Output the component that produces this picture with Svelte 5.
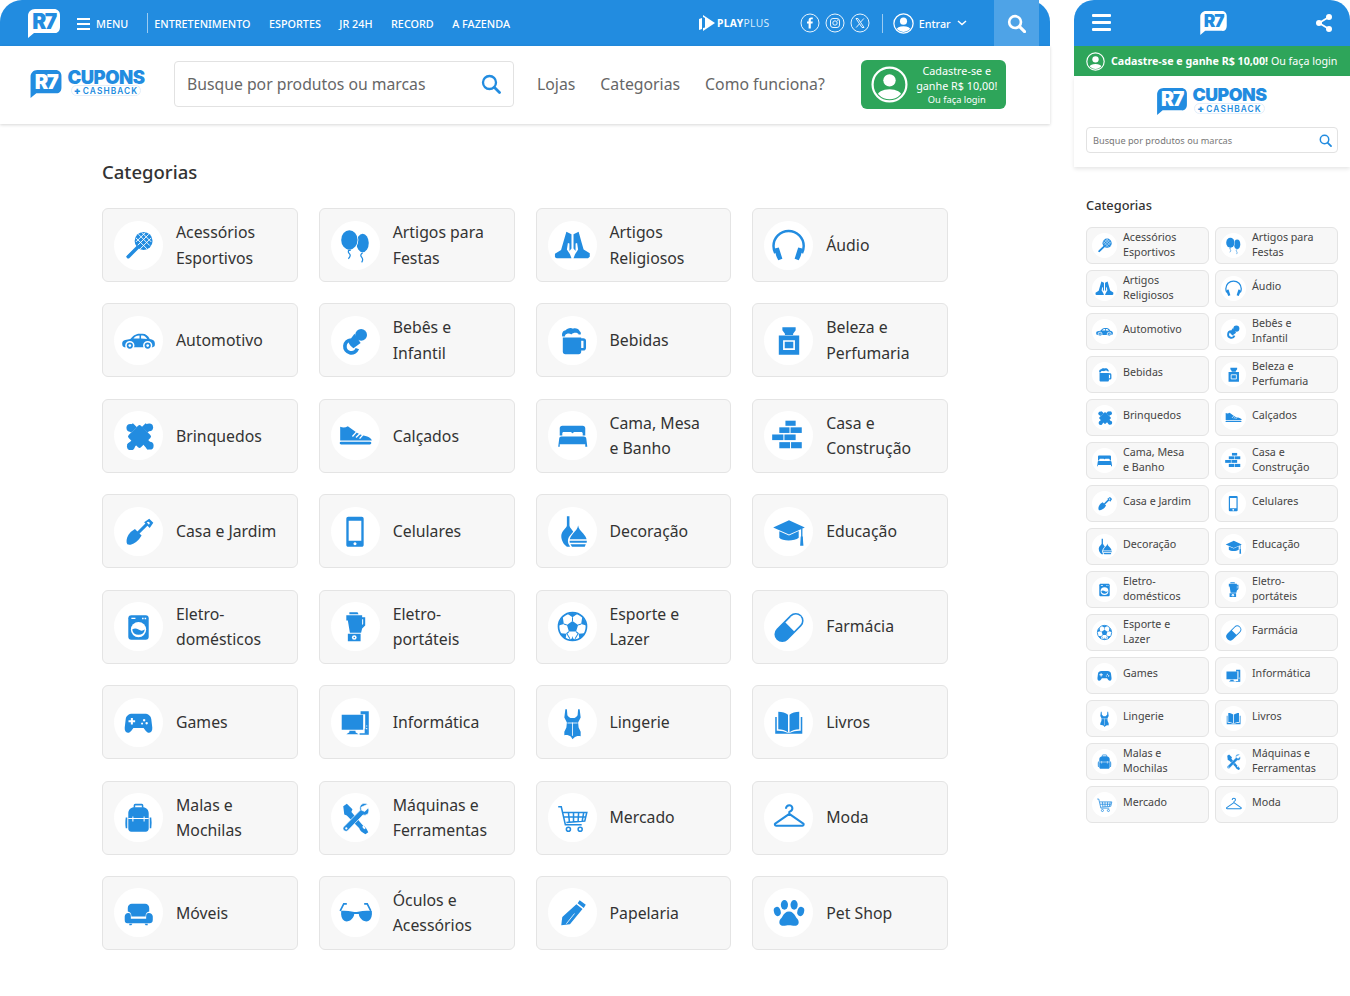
<script>
const B = '#228ce0';
const icons = {
racket: `<circle cx="29" cy="19.500" r="8.800" fill="${B}"/><path d="M24 13l11 11M21.500 16.500l11 11M27.500 11.500l9 9M34 13L23 24M36.500 16.500l-11 11M30.500 11.500l-9 9" stroke="#fff" stroke-width=".9" fill="none"/><path d="M23.500 26L20 27.500l-8 7.500 1.500 1.500 7.500-8z" fill="${B}"/><path d="M23.500 25.500l-9.500 9.500" stroke="${B}" stroke-width="3.400" stroke-linecap="round"/>`,
balloons: `<ellipse cx="31" cy="21.500" rx="6" ry="9" fill="${B}"/><path d="M31 31q-3 2-1 4.500t0 5M18 28q-2 2 0 4t-1 5" stroke="${B}" stroke-width="1.200" fill="none"/><ellipse cx="18" cy="18.500" rx="8.800" ry="10.200" fill="#fff"/><ellipse cx="18" cy="18.500" rx="8" ry="9.500" fill="${B}"/><path d="M16 28h4l-1 1.500h-2z" fill="${B}"/>`,
hands: `<path fill="${B}" d="M18 10.500l5 2.500V27l-2 2.500V22l-1.500-.5-1 6.500 3 4.500 1.500 4H8.500L6.800 35.500v-3.500l6-3.500 2-7zM30 10.500l-5 2.500V27l2 2.500V22l1.500-.5 1 6.500-3 4.500-1.500 4h14.200l1.700-1.500v-3.500l-6-3.500-2-7z"/>`,
headphones: `<path d="M11 31.500c-1-2-1.700-4.500-1.700-7a14.800 14.800 0 0 1 29.600 0c0 2.500-.7 5-1.700 7" fill="none" stroke="${B}" stroke-width="2.400"/><path d="M10.500 27l4-1 3.500 11-4 1.500q-3-5-3.500-11.500zM37.500 27l-4-1L30 37l4 1.500q3-5 3.500-11.500z" fill="${B}"/>`,
car: `<path fill="${B}" d="M8 27c0-2 1-3 3-3.500l5-1c2.500-2.500 5-5 9-5h3c3 0 5.500 2 7 5 3 .5 5 1.500 5 4v2c0 1-1 2-2 2H10c-1 0-2-1-2-3.500z"/><path fill="#fff" d="M19 22c1.500-1.500 3-2.800 6-2.800v2.800zM26.500 19.200h1.500c2 0 3 1.300 4.500 3.300l-6-.5z"/><g fill="${B}" stroke="#fff" stroke-width="1.500"><circle cx="15.500" cy="29" r="3.800"/><circle cx="33" cy="29" r="3.800"/></g><circle cx="15.500" cy="29" r="1.300" fill="#fff"/><circle cx="33" cy="29" r="1.300" fill="#fff"/>`,
pacifier: `<path d="M19.500 23.500a6.300 6.300 0 1 0 6.300 8.500" fill="none" stroke="${B}" stroke-width="3.600"/><circle cx="29.500" cy="18.500" r="5.800" fill="${B}"/><path d="M17 25.500l6-8 6 9-7 5c-2-1-4-3.500-5-6z" fill="${B}"/><path d="M17.500 29.500c.8 1 1.500 1.500 3 2" stroke="#fff" stroke-width="1" fill="none"/>`,
beer: `<path fill="${B}" d="M14.500 21h18v14c0 1.500-1 2.500-2.500 2.500H17c-1.500 0-2.500-1-2.500-2.500z"/><path fill="none" stroke="${B}" stroke-width="2.500" d="M32 23h2.500c1 0 1.500.7 1.500 1.500V31c0 1-.7 1.500-1.500 1.500H32"/><path fill="${B}" d="M14 20c-1-4 1.500-6 3.500-6 1-2 5-3 7-1.500 2-1 6 0 6.500 2.500 1 .5 1.500 2 1 3h-2c-1-2-5-2-7 0-2-1.500-5-1-6 .5v1.500z"/><path fill="#fff" d="M16.500 19.500c1-1.500 4-2.500 6-.7 2-1.800 5-1.800 7.500 0v1.500H16.500z"/>`,
perfume: `<path fill="${B}" d="M18 11h13v3l-2.500 3.500v1h-8v-1L18 14zM14.500 19h20v19h-20z"/><path fill="none" stroke="#fff" stroke-width="1.600" d="M19.500 24.500h10v8h-10z"/>`,
puzzle: `<g fill="${B}"><rect x="16.500" y="16.500" width="17" height="17" rx="2" transform="rotate(45 25 25)"/><circle cx="16" cy="16.500" r="3.800"/><circle cx="34.500" cy="16" r="3.800"/><circle cx="35" cy="34" r="3.800"/><circle cx="16.500" cy="34.500" r="3.800"/><path d="M12.500 17l6-5 4 4-6 5zM31 12l6 5-4 4-6-5zM38 33l-5 5-5-6 5-4zM13 33l5 5 5-6-5-4z"/></g>`,
shoe: `<path fill="${B}" d="M9 15.500c2.500 1 5 1 7.500-.5l8.500 6c3.500 2.500 7 2.500 10.500 4 2.500 1 4 2 4.500 4H9z"/><path fill="none" stroke="#fff" stroke-width="1.300" d="M21 25l4-4.500M24.500 26l4-4M28 27l3.500-4"/><rect x="8.500" y="30" width="31" height="2.800" rx="1.400" fill="${B}"/>`,
bed: `<path fill="${B}" d="M14 14.500h20c1.500 0 2.500 1 2.500 2.500v7h-2.500v-2c0-1-.7-1.500-1.500-1.500h-6c-1 0-2.500.7-2.500 1.500 0-.8-1.500-1.500-2.500-1.500h-6c-1 0-1.500.5-1.500 1.500v2h-2.500v-7c0-1.500 1-2.500 2.500-2.500zM11 27c0-1.300 1-2 2-2h22c1.200 0 2.500.7 2.500 2l1 8h-2v-2.500h-25V35h-1.500z"/>`,
bricks: `<g fill="${B}"><rect x="21" y="9.500" width="10" height="5"/><rect x="15" y="16" width="10" height="5.500"/><rect x="26" y="16" width="11" height="5.500"/><rect x="8" y="23" width="11" height="5.500"/><rect x="20" y="23" width="11" height="5.500"/><rect x="15" y="30.500" width="10.500" height="6"/><rect x="26.500" y="30.500" width="10.500" height="6"/></g>`,
shovel: `<path fill="${B}" d="M13 36.500c-2-4 .5-9.500 4-12.500l3.500-2.500 6.500 6.500-2.500 3.500c-3 3.500-8 6.500-11.500 5z"/><path d="M23 26l10-10" stroke="${B}" stroke-width="3"/><path fill="${B}" fill-rule="evenodd" d="M34.500 11.500l4 4-3.500 5-5.500-5.500zM33.500 14.500a1.500 1.500 0 1 0 .01 0z"/>`,
phone: `<path fill="${B}" fill-rule="evenodd" d="M17 9.500h13c1.300 0 2 .7 2 2v25.500c0 1.300-.7 2-2 2H17c-1.300 0-2-.7-2-2V11.500c0-1.300.7-2 2-2zM17.300 13.500v19.500h12.400V13.500zM23.500 34.500a1.500 1.500 0 1 0 .01 0z"/>`,
vases: `<path fill="${B}" d="M18.500 9h2.500v9c.2 3 5 5 5 11 0 4.500-2.500 8.500-5 10h-2.500c-3-2-5.500-6-5.500-10.500 0-5.500 5.500-8 5.500-10.500z"/><path fill="#fff" d="M29.500 16.500c.5 3.500 3 5 5.500 8 2.500 2.500 4.500 5.500 4.500 9 0 2.500-1 4.500-2.500 6.500H23c-1.500-1.500-3.500-4-3.500-6.500 0-4 2.500-6 5-9 2-2.500 4-4.500 5-8z"/><path fill="${B}" d="M29.500 18c.5 3.500 2.500 5 5 8 1.500 2 2.800 3.500 3.300 5.500H21.300c.5-2 1.800-3.500 3.200-5.500 2.500-3 4.500-4.500 5-8zM21.200 33H38c.1 1 0 1.500-.2 2H21.400c-.2-.5-.3-1-.2-2zM22 36.500h15L36 39H23.500z"/>`,
cap: `<path fill="${B}" d="M24.500 13L40 20l-15.500 7L9 20z"/><path fill="${B}" d="M15 23.800v6.400c3 3.500 15 3.500 19 0v-6.600l-9.500 4.400z"/><path stroke="${B}" stroke-width="1.300" d="M37 21v14"/><path fill="${B}" d="M36 29h2l.6 9h-3.200z"/>`,
washer: `<path fill="${B}" d="M17 13h14c2 0 3 1 3 3v18c0 2-1 3-3 3H17c-2 0-3-1-3-3V16c0-2 1-3 3-3z"/><circle cx="24" cy="27" r="7.500" fill="#fff"/><path fill="${B}" d="M17.800 27c2-1.500 4-1.500 6.200 0s4 1.500 6.200 0a6.300 6.300 0 0 1-12.400 0z"/><path fill="#fff" d="M17 15.500h4v1.200h-4zM27.500 15.500h1.500v1.500h-1.500zM30 15.500h1.500v1.500H30z"/>`,
blender: `<path fill="${B}" d="M18 10h8l1 2H18zM15 13h15.500v2h3V23l-3 3-1 4H18.500L16.500 18h-1.500zM30.500 17v5.500l1-1V17zM16.500 31h12.500v7.500H16.500z"/><circle cx="22.800" cy="34.800" r="2.300" fill="#fff"/><circle cx="22.800" cy="34.800" r=".8" fill="${B}"/>`,
ball: `<circle cx="24" cy="24" r="13.700" fill="#fff" stroke="${B}" stroke-width="1.700"/><path fill="${B}" d="M24 18.500l5.500 4-2 6.500h-7l-2-6.500zM19 11.500c3-1 7-1 10 0l-5 3.500zM33.500 15c2 2 3.500 5 4 8l-5-1.500zM14.500 15c-2 2-3.500 5-4 8l5-1.500zM12.200 30.500c1.200 2.500 3 4.500 5 5.800l.8-5.300zM35.800 30.500c-1.200 2.500-3 4.500-5 5.800l-.8-5.300zM21 37.600c2 .3 4 .3 6 0l-3-2.500z"/><path stroke="${B}" stroke-width="1" fill="none" d="M24 15v3.500M32.500 21.500l-3 1M15.500 21.500l3 1M18 31l2.500-2M30 31l-2.500-2M24 35v-1M20.500 29l-2 2 3 5M27.500 29l2 2-3 5"/>`,
pill: `<g transform="rotate(-45 24.500 25)"><rect x="7.500" y="17.300" width="34" height="15.400" rx="7.700" fill="${B}"/><path fill="#fff" d="M25.500 19h8.500a6 6 0 0 1 0 12h-8.500z"/></g>`,
gamepad: `<path fill="${B}" d="M18 15.500h12c3.500 0 6 2 6.500 5l1 8.500c.3 3-1 5-3 5-1.500 0-2.500-.8-3.500-2l-2-2.500H19l-2 2.500c-1 1.200-2 2-3.500 2-2 0-3.300-2-3-5l1-8.500c.5-3 3-5 6.500-5z"/><path fill="#fff" d="M16.500 19.500h2v2.200h2.200v2h-2.200V26h-2v-2.300h-2.300v-2h2.300zM29.500 20.500a1.200 1.200 0 1 0 .01 0zM32 23.500a1.200 1.200 0 1 0 .01 0zM27.500 24a1 1 0 1 0 .01 0z"/>`,
computer: `<path fill="${B}" d="M10.500 16.500h21v14.500h-21zM18 32h6v1.500l3 2H15l3-2zM29 13h8v23h-9v-1.500h7.500V30h-2V16h-4.500z"/><path fill="${B}" d="M33 30h3v5h-3z"/><path fill="#fff" d="M34.500 27h1v1h-1zM34.500 29.500h1v1h-1z"/>`,
lingerie: `<path fill="${B}" d="M17 11h1.500l.5 6c1 1.500 2 2 3 2.500h4c1-.5 2-1 3-2.500l.5-6H31l1 8-2.500 5 .5 5 2 4v4.500c-2-.7-5-.2-6.500 1.500l-1.500 1.500L22.500 38c-1.500-1.500-4.500-2-6.500-1.500V33l2-4 .5-5L16 19z"/><path d="M24 24v13M19 24.500h10" stroke="#fff" stroke-width=".8" fill="none"/>`,
book: `<path fill="${B}" d="M14 13.500c3.500 0 7.500 1 9.500 3v17c-2.500-1.800-6-2.800-9.500-2.800zM34.500 13.500c-3.500 0-7.500 1-9.500 3v17c2.500-1.800 6-2.800 9.500-2.800zM11 18.500h1.500V32c4-.2 7.500.5 10.500 2h2.500c3-1.500 6.500-2.200 10.500-2V18.500h1.500V35H11z"/>`,
bag: `<path fill="none" stroke="${B}" stroke-width="1.500" d="M20 14.500v-2.300c0-.5.3-.8.8-.8h6.400c.5 0 .8.3.8.8v2.300"/><path fill="${B}" d="M20 14h8c3.500 0 6 2.500 6 6v15c0 1.500-1 3-3 3H17c-2 0-3-1.500-3-3V20c0-3.500 2.500-6 6-6zM11.500 24h1.500v10.500h-1.500c-.5-3-.5-7 0-10.500zM35 24h1.500c.5 3.500.5 7 0 10.500H35z"/><path stroke="#fff" stroke-width="1" fill="none" d="M14 25h20M18.500 23v5M29.500 23v5"/>`,
tools: `<path fill="${B}" d="M15.500 10.500l5.500 5.500-1 2.500 11.500 13.500c1.500.5 2.800 2 3.500 3.500l1.500 3-2.800 2-3-2c-1.500-1-2.500-2.500-3-4L15.500 22 13 21l-1-8z"/><path fill="#fff" d="M30.500 33l2 2.500 1.500-1-2-2.500z"/><path fill="${B}" stroke="#fff" stroke-width=".7" d="M36 11c-2.500-1.500-5.500-1-7 1-1 1.500-1 3.500-.5 5L12.500 33c-1 1-1 2.500 0 3.500s2.700 1.500 3.800.5l15-15.500c2 .5 4 .1 5-1.500 1-1.500 1-3.500.3-5.500l-3.500 3.500-3-1-.5-3z"/><circle cx="15" cy="34.700" r="1.100" fill="#fff"/>`,
cart: `<path fill="none" stroke="${B}" stroke-width="1.500" d="M10 13.500h3l4 17.500h16M15 19h23l-2 8.500-18 1.500M20 19l1 9.500M25 19v9.500M30 19l-.5 8.500M35 19l-1.500 8.500M15.500 23.500h21"/><circle cx="20" cy="35.500" r="2" fill="none" stroke="${B}" stroke-width="1.500"/><circle cx="31.500" cy="35.500" r="2" fill="none" stroke="${B}" stroke-width="1.500"/>`,
hanger: `<path fill="none" stroke="${B}" stroke-width="2" stroke-linejoin="round" d="M21.500 15.500c0-2 1.500-3.500 3.300-3.500s3 1.500 3 3c0 1.800-1.200 2.800-3 3.500v2L38.500 30c.8.700.3 2-.8 2H11.800c-1.100 0-1.600-1.300-.8-2l13.800-9.500"/>`,
chair: `<path fill="${B}" d="M17.500 15.500h13c2.200 0 4 1.800 4 4v3.500c-2 .2-3.500 1.800-3.500 4v1H17v-1c0-2.200-1.500-3.800-3.500-4v-3.500c0-2.200 1.800-4 4-4zM14 24.500c1.700 0 2.500 1 2.500 3V30h15v-2.500c0-2 .8-3 2.500-3 2.200 0 4 1.500 4 3.500v3c0 2.500-1.500 3.500-3 3.500H13c-1.500 0-2.500-1-2.500-3.500v-3c0-2 1.500-3.500 3.500-3.500zM15 35h3l-1 1.500h-2zM30 35h3v1.500h-2z"/>`,
glasses: `<path fill="${B}" d="M8 22.500c5-.5 9-.3 13.500.8 1.500.4 3.500.4 5 0 4.500-1.100 8.500-1.300 13.500-.8.500 4.500-.5 8-3 9.700-3 1.500-6.500 0-8.200-2.700-1-1.500-1.500-2.800-1.500-4h-4.600c0 1.200-.5 2.500-1.500 4-1.700 2.700-5.200 4.200-8.200 2.700-2.500-1.700-3.500-5.200-3-9.700z"/><path fill="none" stroke="${B}" stroke-width="1.600" d="M9 22.500l3.500-7h3M39 22.500l-3.500-7h-3"/>`,
pencil: `<path fill="${B}" d="M31 12l6 4.500-2 3-6-4.500zM27.800 16l6 4.500L21.500 35.500 13 36.500l.5-4.500 .5-3.500z"/><path stroke="#fff" stroke-width=".8" d="M26 25L18 35"/>`,
paw: `<g fill="${B}"><ellipse cx="13" cy="23" rx="3.300" ry="4.600" transform="rotate(-15 13 23)"/><ellipse cx="20" cy="16.500" rx="3.500" ry="4.800"/><ellipse cx="29.500" cy="16.500" rx="3.500" ry="4.800"/><ellipse cx="36" cy="23" rx="3.300" ry="4.600" transform="rotate(15 36 23)"/><path d="M24.500 23c3 0 5 2 6.500 5 1 2 3 3 3 5.500 0 2.500-2 3.500-4 3.500-2 0-3.500-.5-5.500-.5s-3.500.5-5.500.5c-2 0-4-1-4-3.500 0-2.500 2-3.500 3-5.500 1.500-3 3.500-5 6.500-5z"/></g>`
};
const all = [
['Acessórios\nEsportivos','racket'],['Artigos para\nFestas','balloons'],['Artigos\nReligiosos','hands'],['Áudio','headphones'],
['Automotivo','car'],['Bebês e\nInfantil','pacifier'],['Bebidas','beer'],['Beleza e\nPerfumaria','perfume'],
['Brinquedos','puzzle'],['Calçados','shoe'],['Cama, Mesa\ne Banho','bed'],['Casa e\nConstrução','bricks'],
['Casa e Jardim','shovel'],['Celulares','phone'],['Decoração','vases'],['Educação','cap'],
['Eletro-\ndomésticos','washer'],['Eletro-\nportáteis','blender'],['Esporte e\nLazer','ball'],['Farmácia','pill'],
['Games','gamepad'],['Informática','computer'],['Lingerie','lingerie'],['Livros','book'],
['Malas e\nMochilas','bag'],['Máquinas e\nFerramentas','tools'],['Mercado','cart'],['Moda','hanger'],
['Móveis','chair'],['Óculos e\nAcessórios','glasses'],['Papelaria','pencil'],['Pet Shop','paw']
];
const mobile = all.slice(0,28);
const nav = ['ENTRETENIMENTO','ESPORTES','JR 24H','RECORD','A FAZENDA'];
</script>

{#snippet bubble(cls)}
  <span class="bubble {cls}">
    <svg viewBox="0 0 32 29" aria-hidden="true"><path d="M7 0h19c3.500 0 6 2.500 6 6v12c0 4-2.500 6.500-6 6H6L0 29V7c0-4 3-7 7-7z"/><text x="16" y="19.500" text-anchor="middle">R7</text></svg>
  </span>
{/snippet}

{#snippet brand(cls)}
  <div class="brand {cls}">
    {@render bubble('blue')}
    <div class="brand-text">
      <span class="cupons">CUPONS</span>
      <span class="cash"><b>+</b>CASHBACK</span>
    </div>
  </div>
{/snippet}

{#snippet search()}
  <svg class="lens" viewBox="0 0 20 20" aria-hidden="true"><circle cx="8.500" cy="8.500" r="6.500" fill="none" stroke-width="2.300"/><path d="M13.500 13.500L18.500 18.500" stroke-width="2.800" stroke-linecap="round"/></svg>
{/snippet}

{#snippet user(cls)}
  <svg class={cls} viewBox="0 0 40 40" aria-hidden="true"><defs><clipPath id="uclip-{cls}"><circle cx="20" cy="20" r="16"/></clipPath></defs><circle cx="20" cy="20" r="18.300" fill="none" stroke="#fff" stroke-width="2.400"/><g clip-path="url(#uclip-{cls})" fill="#fff"><circle cx="20" cy="15.500" r="6.700"/><ellipse cx="20" cy="33" rx="13.500" ry="8"/></g></svg>
{/snippet}

{#snippet card(item, small)}
  <a class="card" class:small class:one={!item[0].includes('\n')} href="#c">
    <span class="disc"><svg viewBox="0 0 48 48" aria-hidden="true">{@html icons[item[1]]}</svg></span>
    <span class="label">{item[0]}</span>
  </a>
{/snippet}

<div class="page">
  <section class="desk">
    <header class="topbar">
      {@render bubble('white')}
      <span class="burger"><i></i><i></i><i></i></span>
      <span class="item menu">MENU</span>
      <span class="sep"></span>
      <nav class="topnav">
        {#each nav as n}<span class="item">{n}</span>{/each}
      </nav>
      <div class="play">
        <svg viewBox="0 0 17 18" aria-hidden="true"><path d="M1 5l3-1v11l-3 1zM5 1l12 8-12 8v-3l2-.5V4L5 3z" fill="#fff"/><path d="M8 6l5 3-5 3z" fill="#fff" opacity=".75"/></svg>
        <span><b>PLAY</b>PLUS</span>
      </div>
      <div class="social">
        <svg viewBox="0 0 20 20" aria-hidden="true"><circle cx="10" cy="10" r="9"/><path class="f" d="M10.800 15.500v-5h1.700l.3-2h-2V7.300c0-.6.2-1 1-1h1V4.600l-1.500-.1c-1.700 0-2.700 1-2.700 2.700v1.300H7v2h1.600v5z"/></svg>
        <svg viewBox="0 0 20 20" aria-hidden="true"><circle cx="10" cy="10" r="9"/><rect x="5.500" y="5.500" width="9" height="9" rx="2.500"/><circle cx="10" cy="10" r="2.200"/><circle class="f" cx="12.800" cy="7.200" r=".6"/></svg>
        <svg viewBox="0 0 20 20" aria-hidden="true"><circle cx="10" cy="10" r="9"/><path d="M6 5.500h2l6 9h-2zM13.800 5.500L10.700 9M9.300 11l-3.100 3.500"/></svg>
      </div>
      <span class="sep tall"></span>
      {@render user('u-small')}
      <span class="entrar">Entrar</span>
      <svg class="chev" viewBox="0 0 10 6" aria-hidden="true"><path d="M1 1l4 3.500L9 1" fill="none" stroke="#fff" stroke-width="1.500"/></svg>
      <div class="searchbtn">
        <svg viewBox="0 0 20 20" aria-hidden="true"><circle cx="8.500" cy="8.500" r="6.200" fill="none" stroke="#fff" stroke-width="2.800"/><path d="M13.500 13.500L18.500 18.500" stroke="#fff" stroke-width="3.200" stroke-linecap="round"/></svg>
      </div>
    </header>
    <div class="subbar">
      {@render brand('')}
      <div class="searchbox"><span>Busque por produtos ou marcas</span>{@render search()}</div>
      <nav class="links"><span>Lojas</span><span>Categorias</span><span>Como funciona?</span></nav>
      <div class="cta">
        {@render user('u-big')}
        <div class="cta-text"><span>Cadastre-se e</span><span>ganhe R$ 10,00!</span><small>Ou faça login</small></div>
      </div>
    </div>
    <main class="content">
      <h1>Categorias</h1>
      <div class="grid">
        {#each all as item}{@render card(item, false)}{/each}
      </div>
    </main>
  </section>

  <section class="phone">
    <header class="m-top">
      <span class="m-burger"><i></i><i></i><i></i></span>
      {@render bubble('white m')}
      <svg class="share" viewBox="0 0 16 18" aria-hidden="true"><circle cx="3" cy="9" r="3"/><circle cx="13" cy="3" r="3"/><circle cx="13" cy="15" r="3"/><path d="M3 9l10-6M3 9l10 6" stroke="#fff" stroke-width="1.800"/></svg>
    </header>
    <div class="m-promo">
      {@render user('u-promo')}
      <span><b>Cadastre-se e ganhe R$ 10,00!</b> Ou faça login</span>
    </div>
    <div class="m-head">
      {@render brand('center')}
      <div class="searchbox m-search"><span>Busque por produtos ou marcas</span>{@render search()}</div>
    </div>
    <main class="m-content">
      <h2>Categorias</h2>
      <div class="m-grid">
        {#each mobile as item}{@render card(item, true)}{/each}
      </div>
    </main>
  </section>
</div>

<style>
:global(body){margin:0;background:#fff;}
.page{width:1350px;height:996px;overflow:hidden;display:flex;gap:24px;font-family:"Noto Sans",sans-serif;color:#333;background:#fff;}
.desk{width:1050px;flex:none;}
.phone{width:276px;flex:none;}

.topbar{height:46px;background:#228ce0;border-radius:22px 22px 0 0;display:flex;align-items:center;padding-left:28px;box-sizing:border-box;color:#fff;}
.bubble{display:block;width:32px;height:29px;flex:none;}
.bubble svg{display:block;width:100%;height:100%;}
.bubble text{font-family:Inter,"Liberation Sans",sans-serif;font-weight:900;font-size:21px;letter-spacing:-1.500px;}
.bubble.white path{fill:#fff;}
.bubble.white text{fill:#228ce0;}
.bubble.blue path{fill:#228ce0;}
.bubble.blue text{fill:#fff;}
.burger{display:flex;flex-direction:column;gap:3px;width:13px;margin-left:17px;margin-right:6px;padding-top:1px;}
.burger i{display:block;height:2px;background:#fff;}
.item{font-size:10.800px;font-weight:500;white-space:nowrap;}
.sep{width:1px;height:20px;background:rgba(255,255,255,.55);margin-left:19px;}
.topnav{display:flex;gap:18.500px;margin-left:6px;}
.play{display:flex;align-items:center;margin-left:188px;font-size:10.300px;letter-spacing:.35px;gap:2px;color:#d8ebfb;}
.play svg{width:17px;height:18px;}
.play b{color:#fff;font-weight:700;}
.social{display:flex;gap:5px;margin-left:30px;}
.social svg{width:20px;height:20px;fill:none;stroke:#fff;stroke-width:.9;}
.social .f{fill:#fff;stroke:none;}
.sep.tall{height:19px;margin-left:12px;margin-right:10px;}
.topbar :global(.u-small){width:21px;height:21px;flex:none;}
.entrar{font-size:10.800px;font-weight:500;margin-left:5px;}
.chev{width:10px;height:6px;margin-left:6px;}
.searchbtn{width:45px;height:46px;background:#4ea3e7;margin-left:27px;display:flex;align-items:center;justify-content:center;}
.searchbtn svg{width:19px;height:19px;}

.subbar{height:78px;box-shadow:0 1px 3px rgba(0,0,0,.16);display:flex;align-items:center;padding:0 0 2px 30px;box-sizing:border-box;}
.brand{display:flex;align-items:center;gap:5px;width:116px;flex:none;}
.brand .bubble{width:32px;height:28px;}
.brand-text{display:flex;flex-direction:column;align-items:center;line-height:1;width:78px;margin-top:-3px;gap:1px;}
.cupons{font-family:Inter,"Liberation Sans",sans-serif;font-weight:900;font-size:18.500px;color:#228ce0;letter-spacing:-.5px;line-height:14px;}
.cash{font-family:Inter,"Liberation Sans",sans-serif;font-size:8.300px;font-weight:600;letter-spacing:1.100px;color:#228ce0;border:1px solid #e3eefa;border-radius:8px;padding:0 2px;line-height:9px;height:9px;white-space:nowrap;}
.cash b{font-weight:900;font-size:10px;margin-right:1px;line-height:9px;}
.searchbox{display:flex;align-items:center;justify-content:space-between;background:#fff;border:1px solid #e2e2e2;border-radius:4px;box-sizing:border-box;}
.subbar .searchbox{width:340px;height:46px;margin-left:28px;padding:0 12px;font-size:15.750px;color:#666;}
.lens{width:20px;height:20px;fill:none;stroke:#228ce0;flex:none;}
.links{display:flex;gap:25px;margin-left:23px;font-size:15.800px;color:#666;white-space:nowrap;}
.cta{width:145px;height:49px;background:#2ea55a;border-radius:6px;margin-left:36px;display:flex;align-items:center;padding-left:10px;box-sizing:border-box;color:#fff;}
.cta :global(.u-big){width:37px;height:37px;flex:none;}
.cta-text{display:flex;flex-direction:column;align-items:center;width:92px;margin-left:3px;font-size:10.800px;line-height:15px;white-space:nowrap;}
.cta-text small{font-size:9.300px;line-height:13px;}

.content{padding:0 102px;}
h1{font-size:18.500px;font-weight:500;margin:37px 0 25px;line-height:22px;color:#333;}
.grid{display:grid;grid-template-columns:repeat(4,1fr);gap:21.430px 21px;}
.card{display:flex;align-items:center;height:74px;box-sizing:border-box;background:#f7f7f7;border:1px solid #e4e4e4;border-radius:6px;padding-left:11px;text-decoration:none;color:#333;}
.disc{width:49px;height:49px;border-radius:50%;background:#fff;flex:none;display:block;}
.disc svg{display:block;width:100%;height:100%;}
.label{white-space:pre-line;font-size:15.800px;line-height:25.500px;margin-left:13px;padding-top:1px;font-weight:450;}
.card.small{height:37px;border-radius:6px;padding-left:5px;}
.card.small .disc{width:25px;height:25px;}
.card.small .label{font-size:10.700px;line-height:15px;margin-left:6px;color:#444;padding-top:0;margin-top:-1px;font-weight:400;}
.card.small.one .label{margin-top:-5px;}

.m-top{height:46px;background:#228ce0;border-radius:20px 20px 0 0;display:flex;align-items:center;justify-content:space-between;padding:0 18px;box-sizing:border-box;}
.m-burger{display:flex;flex-direction:column;gap:4px;width:19px;margin-top:-2px;}
.m-burger i{display:block;height:3px;background:#fff;border-radius:1px;}
.m-top :global(.bubble.m){width:27px;height:24px;margin-top:-1px;}
.share{width:16px;height:18px;fill:#fff;}
.m-promo{height:30px;background:#2ea55a;display:flex;align-items:center;padding-left:12px;box-sizing:border-box;color:#fff;font-size:10.700px;white-space:nowrap;gap:6px;}
.m-promo b{font-weight:700;}
.m-promo :global(.u-promo){width:19px;height:19px;flex:none;}
.m-head{height:91px;box-shadow:0 2px 4px rgba(0,0,0,.1);padding:12px 12px 0;box-sizing:border-box;display:flex;flex-direction:column;align-items:center;}
.brand.center{justify-content:center;width:112px;}
.brand.center .cupons{font-size:17.800px;}
.brand.center .brand-text{width:76px;margin-top:-1px;}
.brand.center :global(.bubble){width:30px;height:27px;}
.m-search{width:252px;height:26px;margin-top:12px;padding:0 5px 0 6px;font-size:9.200px;color:#777;}
.m-search .lens{width:13px;height:13px;}
.m-content{padding:0 12px;}
h2{font-size:12.800px;font-weight:500;margin:29px 0 13px;line-height:18px;color:#333;}
.m-grid{display:grid;grid-template-columns:repeat(2,1fr);gap:6px;}
</style>
